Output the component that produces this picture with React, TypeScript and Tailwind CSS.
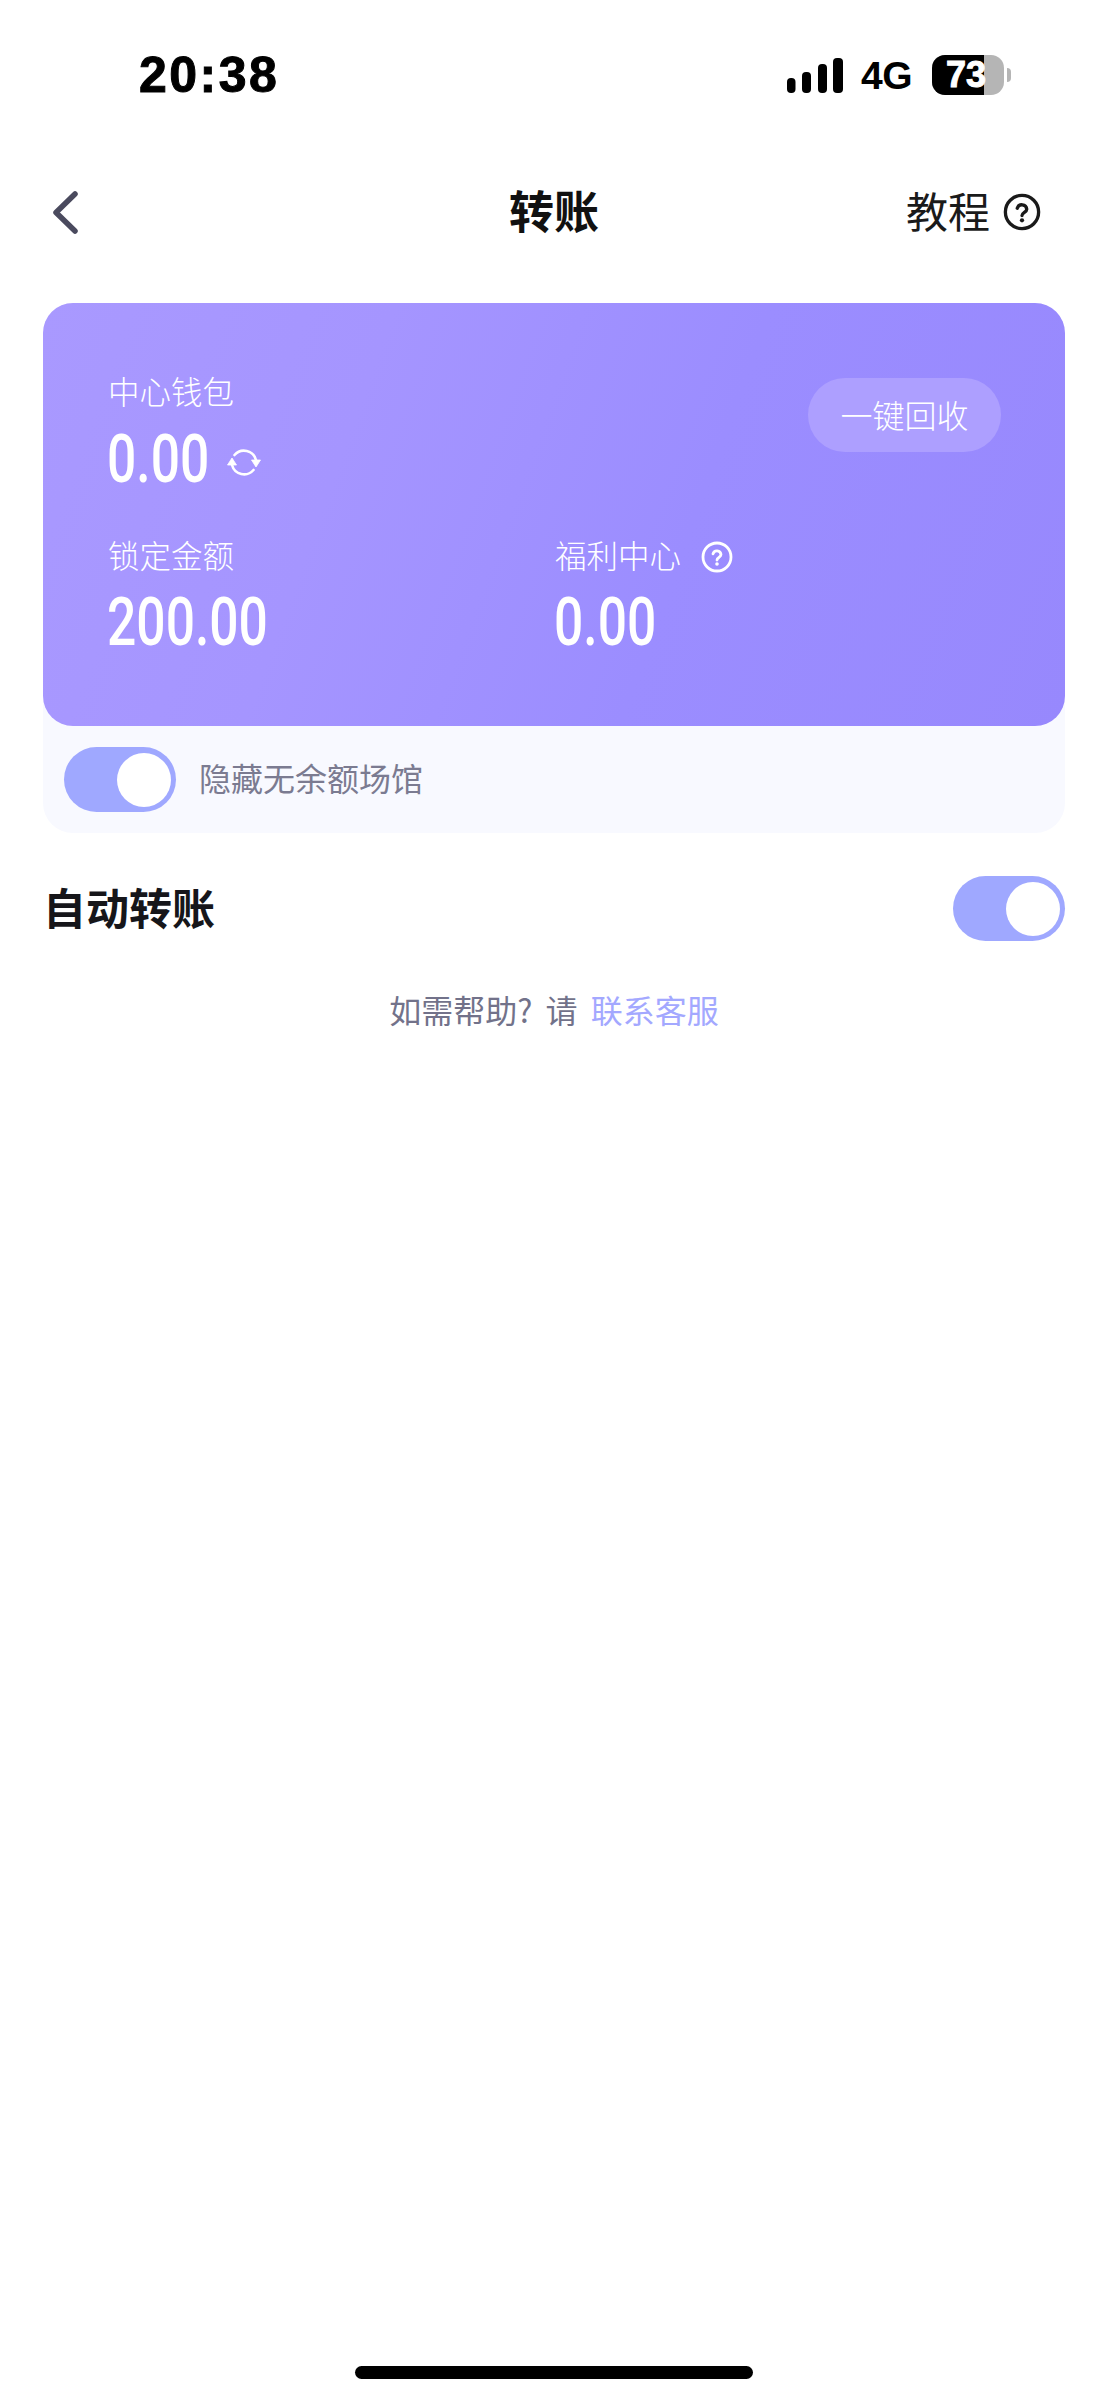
const CJK = "font-['Noto_Sans_CJK_SC','Noto_Sans',sans-serif]"

function HelpIcon({ className }: { className: string }) {
  return (
    <svg viewBox="0 0 32 32" fill="none" stroke="currentColor" className={className}>
      <circle cx="16" cy="16" r="14" strokeWidth="2.8" />
      <path d="M12 12.800a4.100 4.100 0 0 1 8 .8c0 2.600-4 2.800-4 5.400" strokeWidth="2.800" strokeLinecap="round" />
      <circle cx="16" cy="23" r="1.800" fill="currentColor" stroke="none" />
    </svg>
  )
}

function RefreshIcon() {
  return (
    <svg viewBox="0 0 34 29" fill="none" className="w-[34px] h-[29px] mt-[6px]">
      <path d="M7.500 7A12.500 12.500 0 0 1 29 12" stroke="white" strokeWidth="2.600" strokeLinecap="round" />
      <path d="M26.500 22A12.500 12.500 0 0 1 5 17" stroke="white" strokeWidth="2.600" strokeLinecap="round" />
      <path d="M24.500 12h9l-4.500 7z" fill="white" stroke="white" strokeWidth="0.800" strokeLinejoin="round" />
      <path d="M0.500 17h9L5 10z" fill="white" stroke="white" strokeWidth="0.800" strokeLinejoin="round" />
    </svg>
  )
}

function Toggle() {
  return (
    <div className="w-[112px] h-[65px] rounded-full bg-[#9fa8ff] flex items-center justify-end pr-[5px]">
      <div className="w-[54px] h-[54px] rounded-full bg-white" />
    </div>
  )
}

// no condensed face is installed, so Roboto is squeezed to the DIN-like width of the picture
function Amount({ value }: { value: string }) {
  return (
    <div className="-ml-[1px] w-[120px] h-[70px] leading-[70px] text-[67px] font-medium text-white whitespace-nowrap origin-left scale-x-[0.77] font-['Roboto',sans-serif]">
      {value}
    </div>
  )
}

export default function App() {
  return (
    <div className={`w-full h-[2400px] bg-white flex flex-col ${CJK}`}>
      <div className="h-[150px] flex items-center justify-between pl-[139px] pr-[97px] text-black font-['Liberation_Sans',sans-serif]">
        <span className="text-[50px] leading-none font-bold tracking-[2.500px] [-webkit-text-stroke:1px_#000]">20:38</span>
        <div className="flex items-center">
          <svg viewBox="0 0 56 35" className="w-[56px] h-[35px]" fill="black">
            <rect x="0" y="20" width="8.500" height="15" rx="4" />
            <rect x="15" y="14" width="9" height="21" rx="4" />
            <rect x="31" y="6" width="9" height="29" rx="4" />
            <rect x="46" y="0" width="10" height="35" rx="4" />
          </svg>
          <span className="ml-[18px] w-[52px] text-[39px] leading-none font-bold tracking-[-0.5px]">4G</span>
          <div className="relative ml-[19px] w-[72px] h-[40px] rounded-[13px] overflow-hidden flex bg-[#b5b5b5]">
            <div className="w-[52px] bg-black" />
            <span className="absolute left-[14px] top-[2px] text-[36px] leading-[36px] font-bold text-white [-webkit-text-stroke:1px_#fff]">73</span>
          </div>
          <div className="ml-[3px] w-[4px] h-[14px] rounded-r-full bg-[#b5b5b5]" />
        </div>
      </div>

      <div className="h-[124px] grid grid-cols-[1fr_auto_1fr] items-center px-[51px]">
        <svg viewBox="0 0 28 43" fill="none" className="w-[28px] h-[43px]">
          <path d="M24 3 5 21.500 24 40" stroke="#4a4a5e" strokeWidth="5.500" strokeLinecap="round" strokeLinejoin="round" />
        </svg>
        <h1 className="text-[45px] leading-none font-bold text-[#111] pb-[5px]">转账</h1>
        <div className="flex items-center justify-end text-[#1a1a1a] pr-[16px]">
          <span className="text-[42px] leading-none pb-[5px]">教程</span>
          <HelpIcon className="w-[38px] h-[38px] ml-[13px]" />
        </div>
      </div>

      <div className="mt-[29px] mx-[43px] rounded-[30px] bg-[#f8f9ff]">
        <div className="h-[423px] rounded-[30px] bg-[linear-gradient(110deg,#a999ff_0%,#a595ff_30%,#9b8dff_62%,#9788fd_100%)] pl-[65px] pt-[67px] text-white">
          <div className="flex justify-between pr-[64px]">
            <div>
              <div className="text-[31.500px] leading-[40px] font-light">中心钱包</div>
              <div className="mt-[14px] flex items-center">
                <Amount value="0.00" />
                <RefreshIcon />
              </div>
            </div>
            <button className="mt-[8px] w-[193px] h-[74px] rounded-full bg-[#ad9fff] text-[32px] font-light text-white pb-[3px]">一键回收</button>
          </div>
          <div className="mt-[40px] grid grid-cols-[447px_1fr]">
            <div>
              <div className="text-[31.500px] leading-[40px] font-light">锁定金额</div>
              <div className="mt-[13px]"><Amount value="200.00" /></div>
            </div>
            <div>
              <div className="flex items-center">
                <span className="text-[31.500px] leading-[40px] font-light">福利中心</span>
                <HelpIcon className="w-[32px] h-[32px] ml-[20px] mt-[6px]" />
              </div>
              <div className="mt-[13px]"><Amount value="0.00" /></div>
            </div>
          </div>
        </div>
        <div className="h-[107px] pl-[21px] flex items-center gap-[23px]">
          <Toggle />
          <span className="text-[32px] text-[#7b7b91] pb-[5px]">隐藏无余额场馆</span>
        </div>
      </div>

      <div className="mt-[43px] mx-[43px] flex items-center justify-between">
        <span className="text-[43px] leading-none font-bold text-[#16161a] pb-[5px]">自动转账</span>
        <Toggle />
      </div>

      <p className="mt-[48px] text-center text-[32px] leading-[40px] text-[#72728a] [word-spacing:6px]">
        如需帮助? 请 <span className="text-[#a3a8ff]">联系客服</span>
      </p>

      <div className="mt-auto mb-[21px] self-center w-[398px] h-[13px] rounded-full bg-black" />
    </div>
  )
}
